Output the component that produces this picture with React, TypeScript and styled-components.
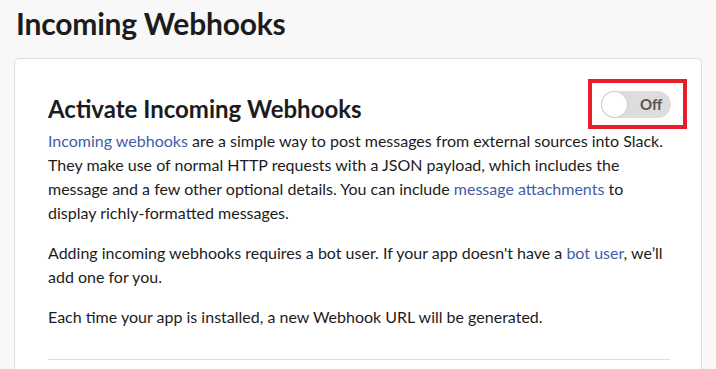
import styled, { createGlobalStyle } from "styled-components";

const GlobalStyle = createGlobalStyle`
  html, body {
    margin: 0;
    padding: 0;
    background: #f8f8f8;
  }
  body {
    font-family: Lato, "Noto Sans", sans-serif;
    color: #1d1c1d;
  }
`;

export default function App() {
  return (
    <>
      <GlobalStyle />
      <Page>
        <Title>Incoming Webhooks</Title>
        <Card>
          <CardHeader>
            <Heading>Activate Incoming Webhooks</Heading>
            <Highlight>
              <Toggle>
                <Knob />
                <ToggleLabel>Off</ToggleLabel>
              </Toggle>
            </Highlight>
          </CardHeader>
          <Paragraph>
            <Link>Incoming webhooks</Link> are a simple way to post messages
            from external sources into Slack. They make use of normal HTTP
            requests with a JSON payload, which includes the message and a few
            other optional details. You can include{" "}
            <Link>message attachments</Link> to display richly-formatted
            messages.
          </Paragraph>
          <Paragraph>
            Adding incoming webhooks requires a bot user. If your app doesn't
            have a <Link>bot user</Link>, we’ll add one for you.
          </Paragraph>
          <Paragraph>
            Each time your app is installed, a new Webhook URL will be
            generated.
          </Paragraph>
          <Divider />
        </Card>
      </Page>
    </>
  );
}

const Page = styled.div`
  padding: 3px 14px 0 14px;
  height: 369px;
  overflow: hidden;
  box-sizing: border-box;
`;

const Title = styled.h1`
  margin: 0 0 15px 2px;
  font-size: 30px;
  font-weight: 700;
  line-height: 40px;
  letter-spacing: -0.2px;
`;

const Card = styled.div`
  width: 688px;
  box-sizing: border-box;
  background: #fff;
  border: 1px solid #ddd;
  border-radius: 5px;
  padding: 20px 31px 40px 33px;
`;

const CardHeader = styled.div`
  display: flex;
  align-items: center;
  justify-content: space-between;
  height: 50px;
`;

const Heading = styled.h2`
  margin: 9px 0 0 0;
  font-size: 24px;
  font-weight: 700;
  line-height: 30px;
`;

const Highlight = styled.div`
  width: 99px;
  height: 50px;
  box-sizing: border-box;
  border: 4px solid #e41e2b;
  display: flex;
  align-items: center;
  justify-content: center;
  padding-right: 3px;
  margin-right: -17px;
`;

const Toggle = styled.div`
  width: 70px;
  height: 27px;
  border-radius: 14px;
  background: #dddddd;
  display: flex;
  align-items: center;
`;

const Knob = styled.div`
  width: 25px;
  height: 25px;
  margin-left: 1px;
  border-radius: 50%;
  background: #fff;
  box-shadow: 0 0 0 1px #cfcfcf;
`;

const ToggleLabel = styled.span`
  margin-left: 13px;
  font-size: 15px;
  font-weight: 700;
  color: #555;
`;

const Paragraph = styled.p`
  margin: 0 0 16px 0;
  font-size: 16px;
  line-height: 24px;
`;

const Link = styled.a`
  color: #3f5ea8;
  text-decoration: none;
  cursor: pointer;
`;

const Divider = styled.hr`
  border: none;
  border-top: 1px solid #dddddd;
  margin: 30px 0 0 0;
`;
